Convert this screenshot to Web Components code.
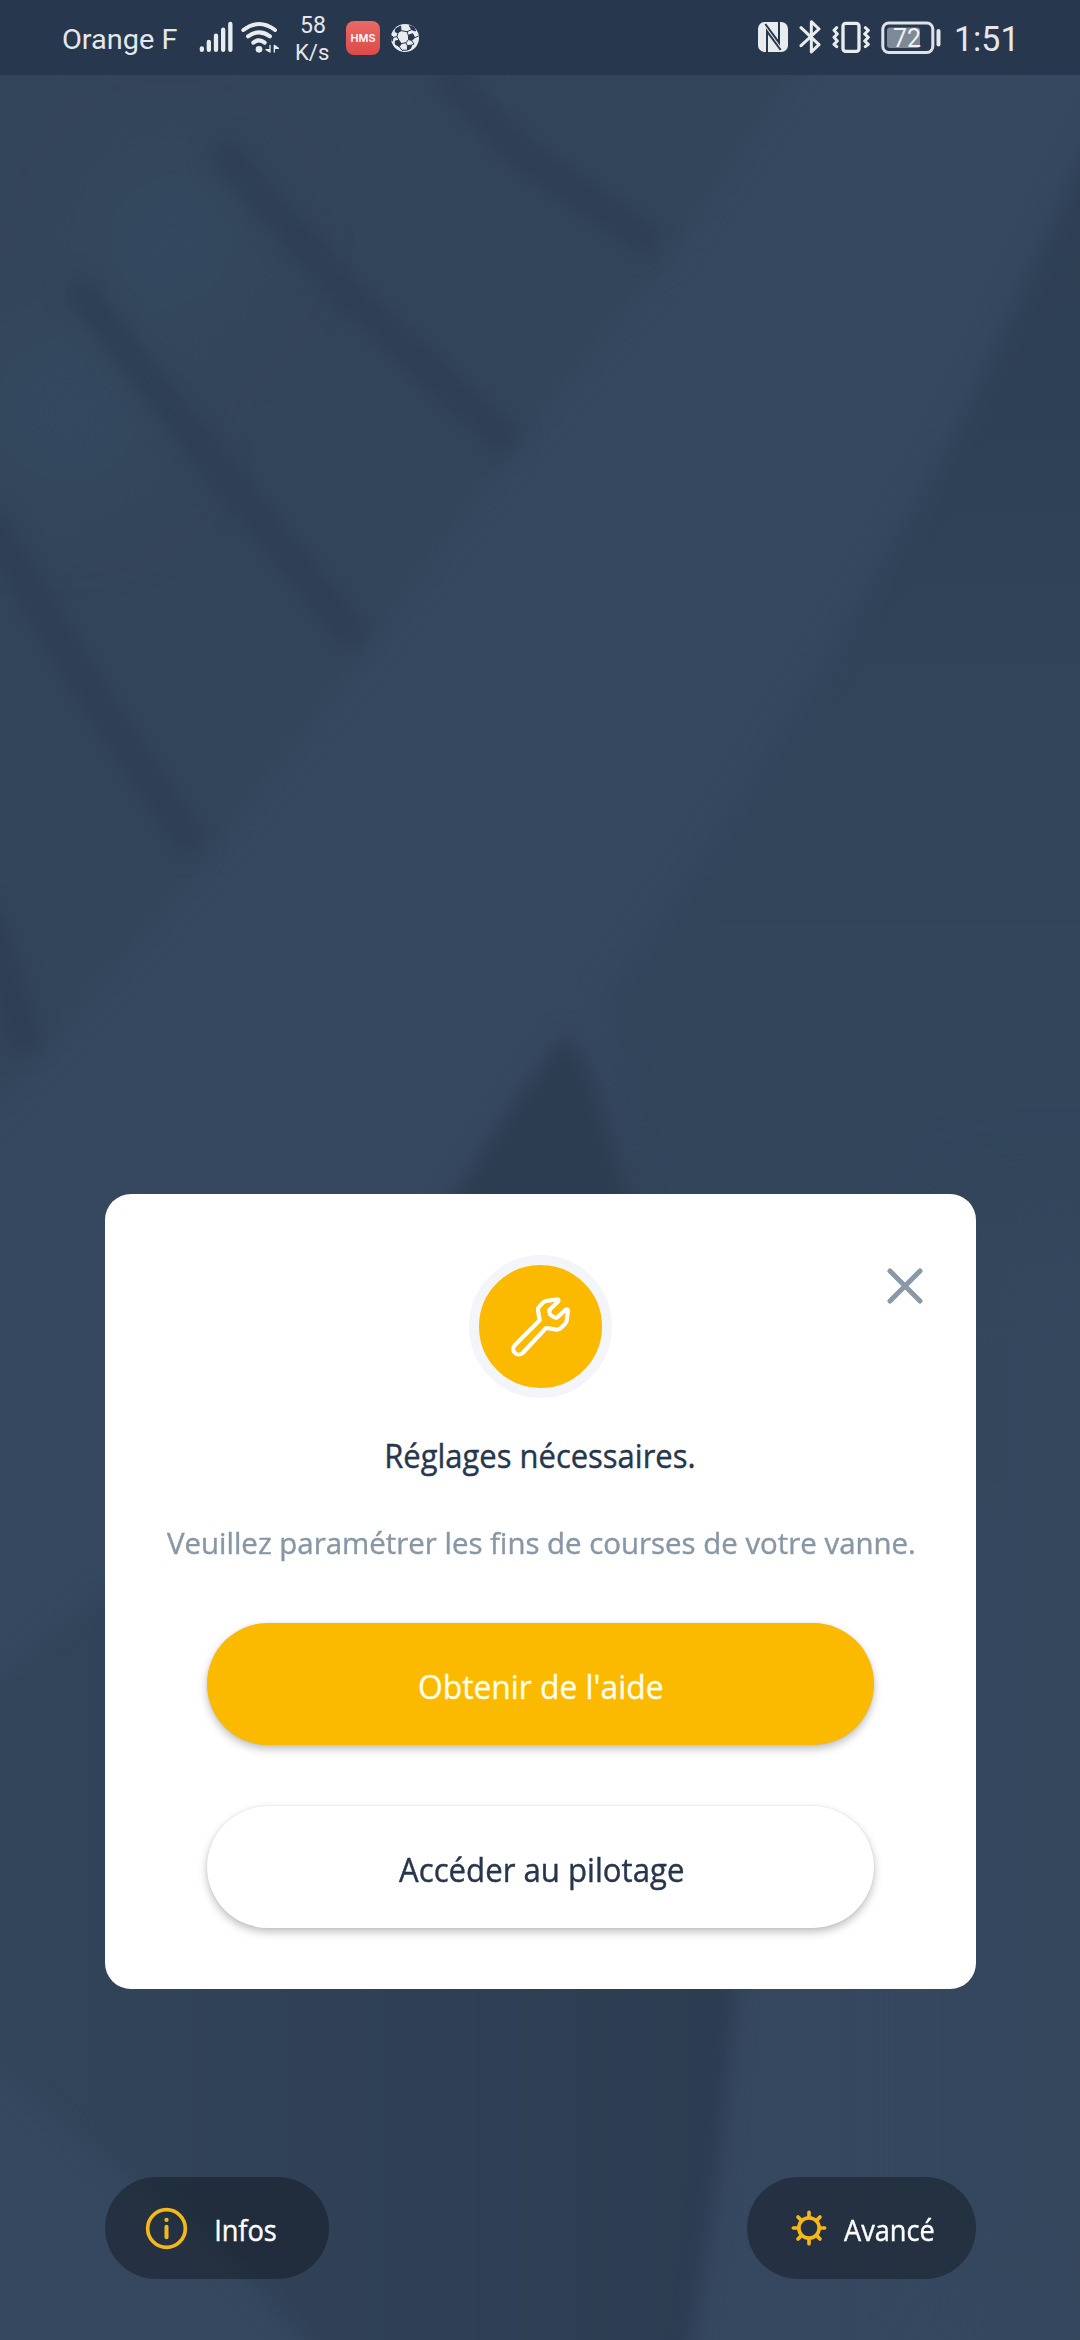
<!DOCTYPE html>
<html lang="fr">
<head>
<meta charset="utf-8">
<title>Réglages nécessaires</title>
<style>
html,body{margin:0;padding:0;background:#36485f}
body{width:1080px;height:2340px;overflow:hidden;font-family:"Open Sans","Noto Sans",sans-serif}
</style>
</head>
<body>
<app-screen>
  <scene-backdrop slot="backdrop"></scene-backdrop>
  <status-bar slot="top"></status-bar>
  <dialog-card>
    <fit-text slot="title" ink="307" size="33" line="44">Réglages nécessaires.</fit-text>
    <fit-text slot="message" ink="747" size="30" line="40">Veuillez paramétrer les fins de courses de votre vanne.</fit-text>
    <pill-button slot="actions" primary><fit-text ink="242" size="33" line="44">Obtenir de l'aide</fit-text></pill-button>
    <pill-button slot="actions"><fit-text ink="284" size="33" line="44">Accéder au pilotage</fit-text></pill-button>
  </dialog-card>
  <corner-chip slot="bottom" style="width:224px;--start:40px;--gap:28px">
    <svg slot="icon" width="43" height="43" viewBox="165.5 138 129 129" fill="none" stroke="#f3b91b" stroke-linecap="round"><circle cx="230" cy="202.500" r="56.500" stroke-width="11"/><path d="M230 197V229" stroke-width="12"/><circle cx="230" cy="176.500" r="6.500" fill="#f3b91b" stroke="none"/></svg>
    <fit-text ink="60" size="29" line="40">Infos</fit-text>
  </corner-chip>
  <corner-chip slot="bottom" style="width:229px;--start:43.500px;--gap:17.500px">
    <svg slot="icon" width="36" height="36" viewBox="-54 -54 108 108" fill="none" stroke="#f6b814" stroke-width="11" stroke-linecap="round"><circle r="30.500"/><path d="M0 -36V-47M0 36V47M-36 0H-47M36 0H47M-25 -25L-33 -33M25 -25L33 -33M-25 25L-33 33M25 25L33 33"/></svg>
    <fit-text ink="89.500" size="29" line="40">Avancé</fit-text>
  </corner-chip>
</app-screen>

<script>
const define = (name, html, setup) => customElements.define(name, class extends HTMLElement {
  constructor() {
    super();
    this.attachShadow({ mode: 'open' }).innerHTML = html;
  }
  connectedCallback() { if (setup) setup(this, this.shadowRoot); }
});

/* A single line whose drawn width (without side bearings) is given by "ink". */
define('fit-text', `
<style>
:host{display:block;flex:none;white-space:nowrap}
span{display:inline-block;transform-origin:0 0}
:host(:not([family])) span{-webkit-text-stroke:.4px currentColor}
</style><span><slot></slot></span>`, (el, root) => {
  const size = el.getAttribute('size'), ink = +el.getAttribute('ink');
  const family = el.getAttribute('family') || 'Open Sans';
  el.style.width = ink + 'px';
  el.style.height = el.getAttribute('line') + 'px';
  el.style.font = `400 ${size}px/${el.getAttribute('line')}px "${family}",sans-serif`;
  const pen = document.createElement('canvas').getContext('2d');
  pen.font = `400 ${size}px "${family}",sans-serif`;
  const box = pen.measureText(el.textContent.trim());
  const scale = ink / (box.actualBoundingBoxLeft + box.actualBoundingBoxRight);
  root.querySelector('span').style.transform = `scaleX(${scale}) translateX(${box.actualBoundingBoxLeft}px)`;
});

define('app-screen', `
<style>
:host{display:grid;grid-template:2340px/1080px;width:1080px;height:2340px;overflow:hidden}
::slotted([slot=backdrop]),.page{grid-area:1/1}
.page{display:flex;flex-direction:column;z-index:1}
main{padding:1119px 104px 0 105px}
footer{display:flex;justify-content:space-between;padding:188px 104px 0 105px}
</style>
<slot name="backdrop"></slot>
<div class="page"><slot name="top"></slot><main><slot></slot></main><footer><slot name="bottom"></slot></footer></div>`);

define('scene-backdrop', `
<style>:host{display:block;width:1080px;height:2340px}svg{display:block}filter{color-interpolation-filters:sRGB}</style>
<svg width="1080" height="2340" viewBox="0 0 724 1568" preserveAspectRatio="none">
<defs>
<filter id="s" x="-20%" y="-20%" width="140%" height="140%"><feGaussianBlur stdDeviation="7"/></filter>
<filter id="m" x="-40%" y="-40%" width="180%" height="180%"><feGaussianBlur stdDeviation="9"/></filter>
<filter id="l" x="-100%" y="-60%" width="300%" height="220%"><feGaussianBlur stdDeviation="32"/></filter>
<linearGradient id="r" x1="0" y1="0" x2="0" y2="1"><stop offset="0" stop-color="#2d3e53"/><stop offset=".25" stop-color="#2e4055"/><stop offset=".45" stop-color="#31445a"/><stop offset="1" stop-color="#33455b"/></linearGradient>
<linearGradient id="b" x1="0" y1="0" x2="1" y2="0"><stop offset="0" stop-color="#32455a"/><stop offset=".6" stop-color="#2f4056"/><stop offset="1" stop-color="#2c3c51"/></linearGradient>
</defs>
<rect width="724" height="1568" fill="#364860"/>
<path d="M-40 -20H575L525 62L450 175L340 310L245 440L140 578L0 742L-40 780Z" fill="#33455a" filter="url(#s)"/>
<g fill="#344a60" filter="url(#l)"><circle cx="115" cy="160" r="50"/><circle cx="45" cy="275" r="55"/></g>
<g fill="none" stroke="#2d3e54" stroke-width="19" stroke-linejoin="round" filter="url(#s)"><path d="M296 48L350 103L438 164"/><path d="M146 98L231 195L343 299"/><path d="M50 190L138 303L240 430"/><path d="M-10 345L60 462L130 568"/><path d="M-10 610L18 703"/></g>
<path d="M760 40L724 110L640 292L560 432L480 562L405 668L425 800L520 1000H760Z" fill="url(#r)" filter="url(#m)"/>
<path d="M780 820V1568H640V820Z" fill="#35475d" filter="url(#l)"/>
<path d="M380 690L345 738L298 810V900H452L422 800L400 726Z" fill="#2d3d51" filter="url(#s)"/>
<path d="M-30 1150L70 1065H494V1330L484 1440L460 1600H230L140 1500L60 1440L-30 1360Z" fill="url(#b)" filter="url(#s)"/>
</svg>`);

define('status-bar', `
<style>
:host{display:flex;box-sizing:border-box;width:1080px;height:75px;background:#27374d;color:#e4e7eb;padding:0 67px 0 63px;justify-content:space-between}
.side{display:flex;align-items:flex-start}
svg{display:block;flex:none}
.rate{display:flex;flex-direction:column;align-items:center;margin:12px 17px 0 17px}
</style>
<div class="side">
  <fit-text family="Roboto" size="28" line="36" ink="114" style="margin-top:21.500px">Orange F</fit-text>
  <svg style="margin-left:22px" width="34" height="80" viewBox="477 0 102 240" fill="none" stroke="#e9ecef" stroke-width="13" stroke-linecap="round"><path d="M485.500 145V149.500M506.500 126V149.500M528 107V149.500M549.500 89V149.500M571 72V149.500"/></svg>
  <svg style="margin-left:8px" width="38" height="80" viewBox="606 0 114 240" fill="none" stroke="#e9ecef" stroke-width="12" stroke-linecap="round"><path d="M613 90Q660 54 708 90M627 109Q660 85 693 109M643 128Q660 114 677 128"/><circle cx="660" cy="148" r="10" fill="#e9ecef" stroke="none"/><path d="M693 136V156L681 149H693M706 156V136L718 145H706" fill="#e9ecef" stroke-width="4" stroke-linejoin="round"/></svg>
  <div class="rate"><fit-text family="Roboto" size="23" line="27" ink="24">58</fit-text><fit-text family="Roboto" size="22" line="27" ink="33">K/s</fit-text></div>
  <svg width="34" height="80" viewBox="0 0 34 80"><defs><linearGradient id="h" x1="0" y1="0" x2="0" y2="1"><stop stop-color="#eb6964"/><stop offset="1" stop-color="#dc4a49"/></linearGradient></defs><rect y="21" width="34" height="34" rx="8" fill="url(#h)"/><text x="4.500" y="42" font-family="Inter,sans-serif" font-weight="600" font-size="11" fill="#fff" textLength="25" lengthAdjust="spacingAndGlyphs">HMS</text></svg>
  <svg style="margin-left:11px" width="28" height="80" viewBox="1053 0 84 240"><defs><clipPath id="k"><circle cx="1095" cy="114" r="42"/></clipPath></defs><circle cx="1095" cy="114" r="42" fill="#e9ecef"/><g clip-path="url(#k)" fill="#27374d" stroke="#27374d" stroke-width="3" stroke-linejoin="round"><path d="M1066 87L1082 78L1083 92L1074 98L1066 96Z"/><path d="M1108 77L1121 81L1127 93L1115 89Z"/><path d="M1105 106L1118 101L1124 113L1115 122L1106 118Z"/><path d="M1066 123L1077 121L1084 131L1078 140L1066 133Z"/><path d="M1102 137L1115 135L1112 145L1103 150Z"/><path d="M1053 106L1060 112L1056 124Z"/><path d="M1083 92L1101 95L1105 106M1101 95L1115 89M1074 98L1071 110L1077 121M1106 118L1098 128L1084 131M1098 128L1102 137M1115 122L1122 132L1115 135M1124 113L1136 108M1060 112L1071 110M1078 140L1086 151L1103 150" fill="none" stroke-width="3"/></g></svg>
</div>
<div class="side">
  <svg width="30" height="80" viewBox="52 0 90 240"><rect x="52" y="66" width="90" height="90" rx="20" fill="#e9ecef"/><path d="M79 157V94L120 150M115 65V128L74 72" fill="none" stroke="#27374d" stroke-width="6"/></svg>
  <svg style="margin-left:10.500px" width="22" height="80" viewBox="174 0 66 240" fill="none" stroke="#e9ecef" stroke-width="9" stroke-linecap="round" stroke-linejoin="round"><path d="M180 83L234 134L211 156V65L234 87L180 137"/></svg>
  <svg style="margin-left:11px" width="38" height="80" viewBox="273 0 114 240" fill="none" stroke="#e9ecef" stroke-width="10" stroke-linecap="round" stroke-linejoin="round"><rect x="306" y="70" width="48" height="84" rx="8"/><path d="M287 83L279 91L289 102L279 112L289 123L279 133L287 140M373 83L382 91L371 102L382 112L371 123L382 133L373 140" stroke-width="9"/></svg>
  <svg style="margin-left:11.500px" width="61" height="80" viewBox="0 0 61 80"><rect x="1.800" y="23" width="50" height="29.500" rx="6" fill="none" stroke="#dfe3e8" stroke-width="3"/><rect x="6" y="27.500" width="33" height="20.500" rx="3" fill="#7e8997"/><path d="M57.500 31V44.500" stroke="#e4e7eb" stroke-width="4" stroke-linecap="round"/><text x="12" y="46.500" font-family="Roboto,sans-serif" font-size="25.500" fill="#eef0f2" textLength="28" lengthAdjust="spacingAndGlyphs">72</text></svg>
  <fit-text family="Roboto" size="35" line="44" ink="57" style="margin:17.500px 0 0 14px">1:51</fit-text>
</div>`);

define('dialog-card', `
<style>
:host{display:flex;flex-direction:column;align-items:center;box-sizing:border-box;width:871px;height:795px;border-radius:26px;background:#fff;color:#27364c}
header{align-self:stretch;display:grid;grid-template-columns:1fr 143px 1fr;padding-top:60.500px}
.badge{grid-column:2;box-sizing:border-box;width:143px;height:143px;border:10px solid #f3f5f8;border-radius:50%;background:#fbb900;display:grid;place-items:center}
.close{justify-self:end;margin:12px 52px 0 0}
svg{display:block}
.title{margin-top:36.500px}
.msg{margin-top:45px;color:#8897a5}
.actions{display:flex;flex-direction:column;gap:61px;margin-top:60px}
</style>
<header>
<div class="badge"><svg width="61" height="61" viewBox="209 198 183 183" fill="none" stroke="#fff" stroke-width="12.500" stroke-linejoin="round" stroke-linecap="round"><path d="M352 208L317 213Q312 214 308 218L295 232Q292 236 293 241L298 271L224 345A16 16 0 0 0 247 369L317 294L350 299Q355 299 359 296L374 282Q378 277 379 272L383 241Q380 236 375 240L352 261Q348 265 343 262L333 257Q329 255 328 249L327 240L352 216Q357 209 352 208Z"/></svg></div>
<svg class="close" width="38" height="38" viewBox="0 0 38 38" stroke="#8999a5" stroke-width="5" stroke-linecap="round"><path d="M4 4L34 34M34 4L4 34"/></svg>
</header>
<div class="title"><slot name="title"></slot></div>
<div class="msg"><slot name="message"></slot></div>
<div class="actions"><slot name="actions"></slot></div>`);

define('pill-button', `
<style>
:host{display:flex;align-items:center;justify-content:center;box-sizing:border-box;width:667px;height:122px;padding-top:6px;border-radius:61px;background:#fff;color:#27364c;box-shadow:0 4px 8px rgba(0,0,0,.25),0 0 2px rgba(0,0,0,.1)}
:host([primary]){background:#fbb900;color:#fffee8}
</style><slot></slot>`);

define('corner-chip', `
<style>
:host{display:flex;align-items:center;box-sizing:border-box;height:102px;border-radius:51px;background:rgba(0,0,0,.31);color:#fff;padding-left:var(--start);gap:var(--gap)}
div{padding-top:4px}
</style><slot name="icon"></slot><div><slot></slot></div>`);
</script>
</body>
</html>
